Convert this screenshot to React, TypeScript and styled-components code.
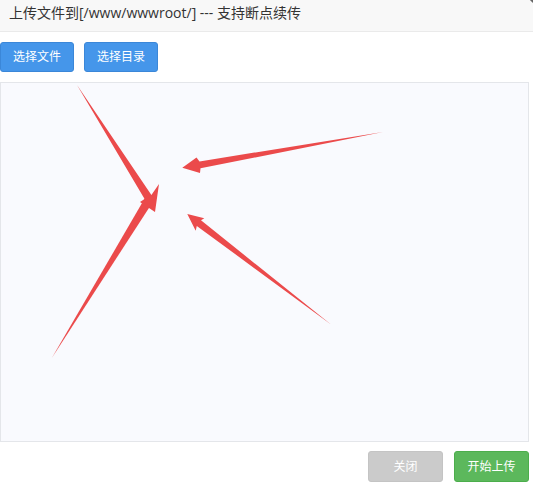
import { FC } from 'react';
import styled, { createGlobalStyle } from 'styled-components';

const GlobalStyle = createGlobalStyle`
    html, body {
        margin: 0;
        padding: 0;
        background: #ffffff;
    }
    body {
        font-family: "Open Sans", "Noto Sans CJK SC", Arial, sans-serif;
    }
`;

const ARROW_RED = '#eb4a4b';

// arrow outlines in page coordinates (panel starts at y=82)
const ARROWS: string[] = [
    '77,85 151.4,194.9 159,184 155,212 140,202 144.6,199.1',
    '51.5,358.5 146.4,195.6 153.8,200.4',
    '383,132 200.5,168.3 200,173 182.3,167.7 196.5,157.5 199.5,161.4',
    '331,324.5 196.8,225.9 195.7,230.7 187.3,214 204.3,218.3 201,220.3',
];

export default function App() {
    return (
        <>
            <GlobalStyle />
            <Dialog>
                <CloseCorner />
                <Header>上传文件到[/www/wwwroot/] --- 支持断点续传</Header>
                <Toolbar>
                    <Button>选择文件</Button>
                    <Button>选择目录</Button>
                </Toolbar>
                <DropPanel>
                    <Arrows />
                </DropPanel>
                <Footer>
                    <Button $variant="muted">关闭</Button>
                    <Button $variant="success">开始上传</Button>
                </Footer>
            </Dialog>
        </>
    );
}

const Arrows: FC = () => (
    <ArrowLayer viewBox="0 82 529 360" width="529" height="360">
        {ARROWS.map((points, index) => (
            <polygon key={index} points={points} fill={ARROW_RED} />
        ))}
    </ArrowLayer>
);

const Dialog = styled.div`
    position: relative;
    width: 533px;
    height: 490px;
    overflow: hidden;
    background: #ffffff;
`;

const CloseCorner = styled.div`
    position: absolute;
    top: -3px;
    right: -3px;
    width: 11px;
    height: 3px;
    background: #666;
    transform: rotate(45deg);
`;

const Header = styled.div`
    box-sizing: border-box;
    height: 32px;
    padding: 3px 0 0 9px;
    background: #f8f8f8;
    border-bottom: 1px solid #eaeaea;
    color: #333;
    font-size: 14px;
    line-height: 19px;
`;

const Toolbar = styled.div`
    display: flex;
    gap: 10px;
    padding: 10px 0 10px 0;
`;

const VARIANTS = {
    primary: { bg: '#4596ea', border: '#3b87d8', color: '#fff' },
    muted: { bg: '#cbcbcb', border: '#c4c4c4', color: '#fff' },
    success: { bg: '#5cb85c', border: '#4cae4c', color: '#fff' },
};

const Button = styled.button<{ $variant?: keyof typeof VARIANTS }>`
    box-sizing: border-box;
    width: 74px;
    height: 30px;
    padding: 0;
    border-radius: 3px;
    border: 1px solid ${({ $variant = 'primary' }) => VARIANTS[$variant].border};
    background: ${({ $variant = 'primary' }) => VARIANTS[$variant].bg};
    color: ${({ $variant = 'primary' }) => VARIANTS[$variant].color};
    font-family: "Open Sans", "Noto Sans CJK SC", sans-serif;
    font-size: 12px;
    line-height: 28px;
    cursor: pointer;
`;

const DropPanel = styled.div`
    position: relative;
    box-sizing: border-box;
    width: 529px;
    height: 360px;
    background: #f9fafe;
    border: 1px solid #e4e6ea;
`;

const ArrowLayer = styled.svg`
    position: absolute;
    top: -1px;
    left: -1px;
    pointer-events: none;
`;

const Footer = styled.div`
    display: flex;
    justify-content: flex-end;
    gap: 11px;
    width: 529px;
    padding-top: 9px;

    & > button {
        height: 31px;
        width: 75px;
    }
`;
